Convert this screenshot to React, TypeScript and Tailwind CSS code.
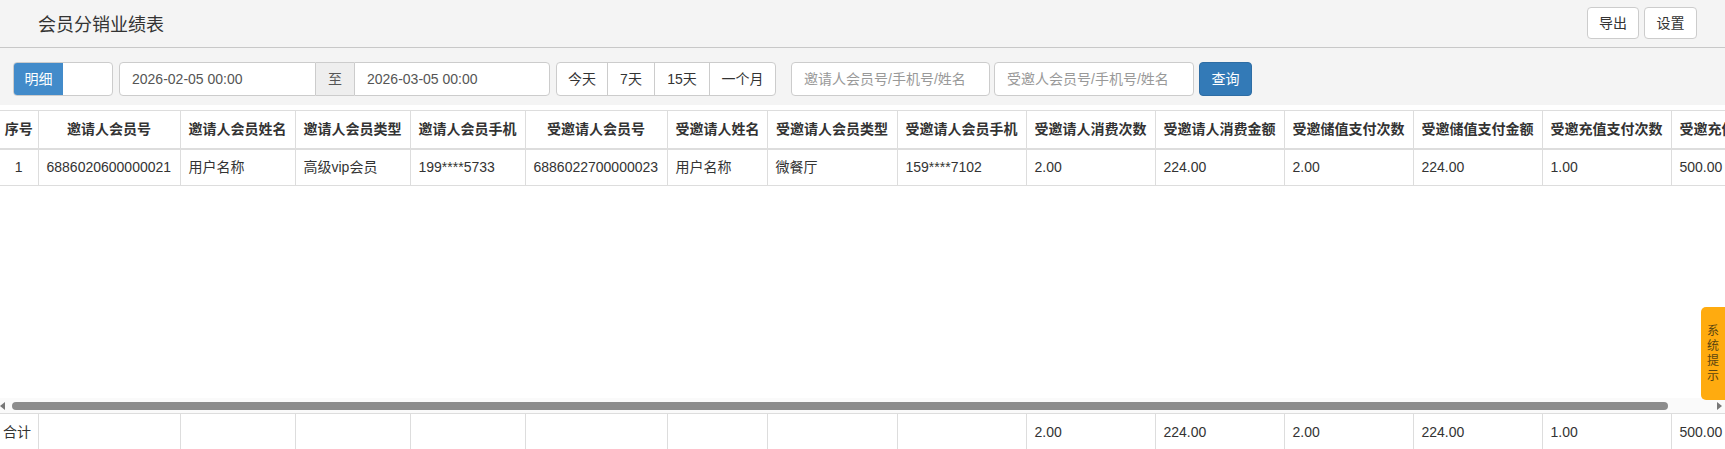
import React from 'react';

const FONT = "font-['Liberation_Sans','Noto_Sans_CJK_SC',sans-serif]";

const COLUMNS = [
  { label: '序号', width: 38 },
  { label: '邀请人会员号', width: 142 },
  { label: '邀请人会员姓名', width: 115 },
  { label: '邀请人会员类型', width: 115 },
  { label: '邀请人会员手机', width: 115 },
  { label: '受邀请人会员号', width: 142 },
  { label: '受邀请人姓名', width: 100 },
  { label: '受邀请人会员类型', width: 130 },
  { label: '受邀请人会员手机', width: 129 },
  { label: '受邀请人消费次数', width: 129 },
  { label: '受邀请人消费金额', width: 129 },
  { label: '受邀储值支付次数', width: 129 },
  { label: '受邀储值支付金额', width: 129 },
  { label: '受邀充值支付次数', width: 129 },
  { label: '受邀充值支付金额', width: 129 },
  { label: '受邀充值赠送金额', width: 129 },
];

const ROWS = [
  ['1', '6886020600000021', '用户名称', '高级vip会员', '199****5733', '6886022700000023', '用户名称', '微餐厅', '159****7102', '2.00', '224.00', '2.00', '224.00', '1.00', '500.00', '0.00'],
];

const TOTALS = ['合计', '', '', '', '', '', '', '', '', '2.00', '224.00', '2.00', '224.00', '1.00', '500.00', '0.00'];

const TABLE_WIDTH = COLUMNS.reduce((s, c) => s + c.width, 0);

const ColGroup = () => (
  <colgroup>
    {COLUMNS.map((c) => (
      <col key={c.label} style={{ width: c.width }} />
    ))}
  </colgroup>
);

export default function App() {
  return (
    <div className={`relative w-[1725px] h-[449px] overflow-hidden bg-white text-[14px] text-[#333] ${FONT}`}>
      {/* 标题栏 */}
      <div className="flex items-center justify-between h-[48px] bg-[#f4f4f4] border-b border-[#c8c8c8] pl-[38px] pr-[28px]">
        <h1 className="text-[18px] leading-none text-[#333] mt-[3px]">会员分销业绩表</h1>
        <div className="flex items-center gap-[5px] -mt-[1px]">
          <button className="w-[52px] h-[32px] bg-white border border-[#ccc] rounded-[4px] text-[14px] text-[#333]">导出</button>
          <button className="w-[53px] h-[32px] bg-white border border-[#ccc] rounded-[4px] text-[14px] text-[#333]">设置</button>
        </div>
      </div>

      {/* 查询条件 */}
      <div className="flex items-center bg-[#f4f4f4] pt-[14px] pb-[9px] pl-[13px]">
        <div className="flex w-[100px] h-[34px] border border-[#ccc] rounded-[4px] overflow-hidden bg-white">
          <span className="w-[49px] flex items-center justify-center bg-[#428bca] text-white">明细</span>
        </div>

        <div className="flex ml-[6px] h-[34px]">
          <div className="w-[197px] flex items-center pl-[12px] bg-white border border-[#ccc] rounded-l-[4px] text-[#555]">2026-02-05 00:00</div>
          <div className="w-[38px] flex items-center justify-center bg-[#eee] border-y border-[#ccc] text-[#555]">至</div>
          <div className="w-[196px] flex items-center pl-[12px] bg-white border border-[#ccc] rounded-r-[4px] text-[#555]">2026-03-05 00:00</div>
        </div>

        <div className="flex ml-[6px] h-[34px] bg-white border border-[#ccc] rounded-[4px]">
          <span className="w-[51px] flex items-center justify-center border-r border-[#ccc]">今天</span>
          <span className="w-[47px] flex items-center justify-center border-r border-[#ccc]">7天</span>
          <span className="w-[55px] flex items-center justify-center border-r border-[#ccc]">15天</span>
          <span className="w-[65px] flex items-center justify-center">一个月</span>
        </div>

        <div className="ml-[15px] w-[199px] h-[34px] flex items-center pl-[12px] bg-white border border-[#ccc] rounded-[4px] text-[#999]">邀请人会员号/手机号/姓名</div>
        <div className="ml-[4px] w-[200px] h-[34px] flex items-center pl-[12px] bg-white border border-[#ccc] rounded-[4px] text-[#999]">受邀人会员号/手机号/姓名</div>
        <button className="ml-[5px] w-[53px] h-[34px] bg-[#337ab7] border border-[#2e6da4] rounded-[4px] text-white">查询</button>
      </div>

      {/* 表格 */}
      <div className="mt-[5px] h-[288px] overflow-hidden">
        <table className="table-fixed border-collapse" style={{ width: TABLE_WIDTH }}>
          <ColGroup />
          <thead>
            <tr className="h-[38px] border-t border-b-2 border-[#ddd]">
              {COLUMNS.map((c, i) => (
                <th
                  key={c.label}
                  className={`font-bold text-center whitespace-nowrap overflow-hidden ${i === 0 ? 'px-0' : 'px-[8px] border-l border-[#ddd]'}`}
                >
                  {c.label}
                </th>
              ))}
            </tr>
          </thead>
          <tbody>
            {ROWS.map((row, r) => (
              <tr key={r} className="h-[37px] border-b border-[#ddd]">
                {row.map((v, i) => (
                  <td
                    key={i}
                    className={`whitespace-nowrap overflow-hidden ${i === 0 ? 'text-center px-0' : 'px-[8px] border-l border-[#ddd]'}`}
                  >
                    {v}
                  </td>
                ))}
              </tr>
            ))}
          </tbody>
        </table>
      </div>

      {/* 横向滚动条 */}
      <div className="flex items-center h-[15px] bg-[#fafafa]">
        <div className="w-[12px] flex items-center">
          <span className="w-0 h-0 border-y-[4px] border-y-transparent border-r-[5px] border-r-[#777]" />
        </div>
        <div className="w-[1656px] h-[8px] rounded-full bg-[#8c8c8c]" />
        <div className="flex-1 flex justify-end pr-[3px]">
          <span className="w-0 h-0 border-y-[4px] border-y-transparent border-l-[5px] border-l-[#777]" />
        </div>
      </div>

      {/* 合计 */}
      <table className="table-fixed border-collapse" style={{ width: TABLE_WIDTH }}>
        <ColGroup />
        <tbody>
          <tr className="h-[38px] border-t border-[#ddd]">
            {TOTALS.map((v, i) => (
              <td
                key={i}
                className={`whitespace-nowrap overflow-hidden ${i === 0 ? 'px-[3px]' : 'px-[8px] border-l border-[#ddd]'}`}
              >
                {v}
              </td>
            ))}
          </tr>
        </tbody>
      </table>

      {/* 系统提示 */}
      <div className="absolute right-0 top-[307px] w-[24px] h-[93px] rounded-l-[5px] bg-[#ffab0f] flex flex-col items-center justify-center text-[12px] leading-[15px] text-[#5a4410]">
        <span>系</span>
        <span>统</span>
        <span>提</span>
        <span>示</span>
      </div>
    </div>
  );
}
